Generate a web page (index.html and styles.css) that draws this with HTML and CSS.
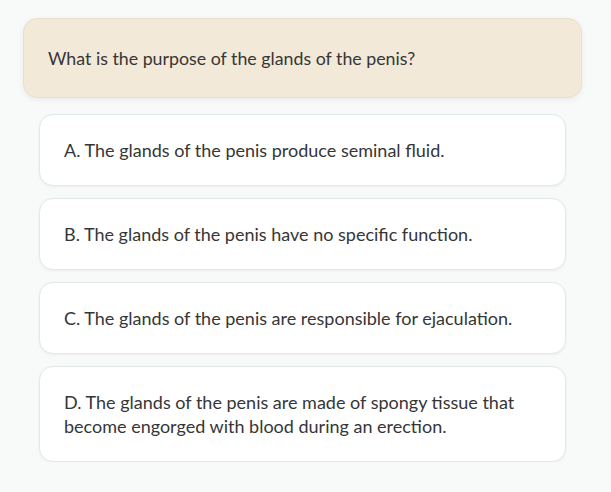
FILE: index.html
```html
<!DOCTYPE html>
<html>
<head>
<meta charset="utf-8">
<link rel="stylesheet" href="styles.css">
</head>
<body>
<main class="quiz">
  <div class="question">What is the purpose of the glands of the penis?</div>
  <ul class="options">
    <li class="option">A. The glands of the penis produce seminal fluid.</li>
    <li class="option">B. The glands of the penis have no specific function.</li>
    <li class="option">C. The glands of the penis are responsible for ejaculation.</li>
    <li class="option">D. The glands of the penis are made of spongy tissue that become engorged with blood during an erection.</li>
  </ul>
</main>
</body>
</html>
```

FILE: styles.css
```css
html, body {
  margin: 0;
  padding: 0;
  background: #f8fafa;
}
body {
  font-family: Lato, "Noto Sans", sans-serif;
  color: #363636;
}
.quiz {
  width: 559px;
  padding: 18px 0 0 23px;
}
.question {
  background: #f2e9d8;
  border: 1px solid #e8e0cc;
  border-radius: 14px;
  padding: 27px 24px 27px 24px;
  font-size: 17.8px;
  line-height: 24px;
  box-shadow: 0 2px 6px rgba(0,0,0,0.06);
}
.options {
  list-style: none;
  margin: 16px 16px 0 16px;
  padding: 0;
  display: flex;
  flex-direction: column;
  gap: 12px;
}
.option {
  background: #ffffff;
  border: 1px solid #e2e8e8;
  border-radius: 14px;
  padding: 23px 24px;
  font-size: 18px;
  line-height: 24px;
  box-shadow: 0 1px 3px rgba(0,0,0,0.05);
}
```
